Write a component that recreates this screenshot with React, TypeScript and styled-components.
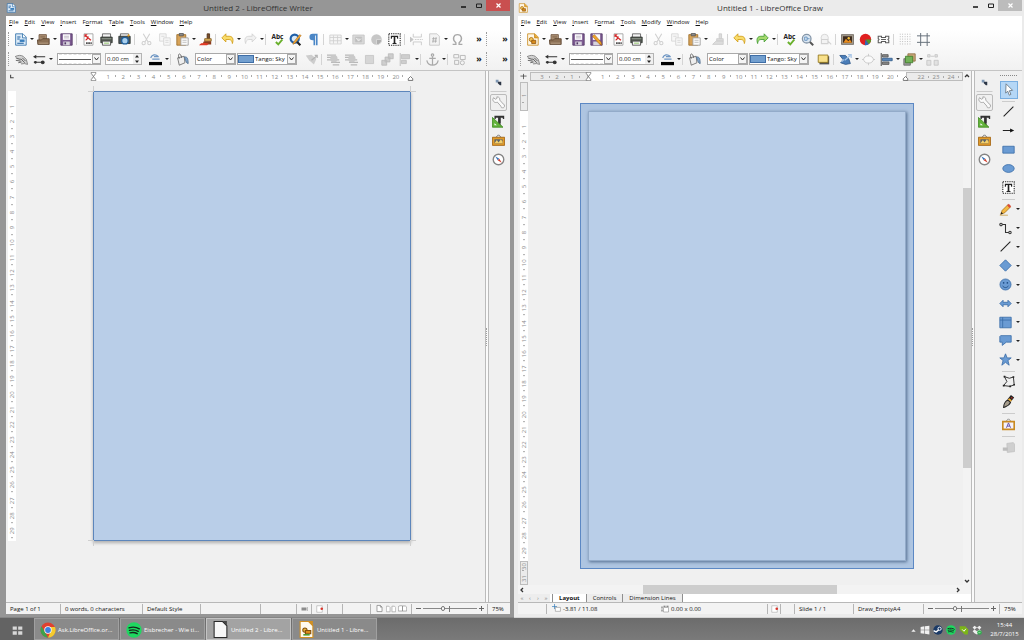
import React, { ReactNode } from "react";
import styled, { createGlobalStyle, css } from "styled-components";

const GlobalStyle = createGlobalStyle`
  * { box-sizing: border-box; }
  body {
    margin: 0;
    background: #777;
    color: #111;
    font: 500 6px/10px "Open Sans", "Noto Sans", sans-serif;
  }
  button, input, select {
    margin: 0;
    padding: 0;
    border: 0;
    background: none;
    color: inherit;
    font: inherit;
  }
  svg { display: block; flex: none; }
`;

/* ---------- icons (16 x 16 grid) ---------- */

const BLUE = "#6a9bd3";
const EDGE = "#3a6ca8";
const FAINT = "#c4c4c4";

const ICONS: Record<string, ReactNode> = {
  writerDoc: (
    <>
      <path d="M2 1h9l4 4v10H2z" fill="#dcebf8" stroke="#2b6ca8" />
      <path d="M10.500 1v5H15" fill="#fff" stroke="#2b6ca8" />
      <path d="M4 5h4M4 7.500h3M4 12.500h8" stroke="#1d5f9e" strokeWidth="1.300" />
      <path d="M7 8h6v3H7z" fill="#3b7fbd" />
    </>
  ),
  drawDoc: (
    <>
      <path d="M2 1h9l4 4v10H2z" fill="#fff7e6" stroke="#c98a1c" />
      <path d="M10.500 1v5H15" fill="#e6a52e" stroke="#c98a1c" />
      <circle cx="6.500" cy="8" r="2.500" fill="#f3c456" stroke="#a66a10" />
      <path d="M7 9h5v4H7z" fill="#d98d1b" stroke="#8f5510" />
    </>
  ),
  open: (
    <>
      <path d="M2.500 2h9v8h-9z" fill="#b59a7e" stroke="#6b5039" />
      <path d="M4 4h6M4 6h6" stroke="#7d6148" />
      <path d="M0.500 8.500h5l1.500-1.500h8v7h-14z" fill="#8c7156" stroke="#57402b" />
      <path d="M2 12.500h12" stroke="#c4ab90" />
    </>
  ),
  save: (
    <>
      <path d="M1 1h14v14H1z" fill="#7c5a91" stroke="#4f3563" />
      <path d="M3.500 1.500h9v7h-9z" fill="#fbfafc" />
      <path d="M5 4h6M5 6h6" stroke="#b7b0bd" />
      <path d="M4 10.500h8V15H4z" fill="#d7d3dc" />
      <path d="M5.500 11.500h2V14h-2z" fill="#4f3563" />
    </>
  ),
  saveAs: (
    <>
      <path d="M1 1h14v14H1z" fill="#7c5a91" stroke="#4f3563" />
      <path d="M3.500 1.500h9v7h-9z" fill="#fbfafc" />
      <path d="M4 10.500h8V15H4z" fill="#d7d3dc" />
      <path d="M3 4l8 9 3.500 2-1-4-8-9z" fill="#f0a428" stroke="#a3600c" strokeWidth=".7" />
    </>
  ),
  pdf: (
    <>
      <path d="M2.500 1h11v14h-11z" fill="#fff" stroke="#9a9a9a" />
      <path d="M3 1.500h4L4 5H3z" fill="#d42a2a" />
      <path d="M4 3l7 6M4.500 9c2-1 3-3 3-5" stroke="#d42a2a" strokeWidth="1.500" fill="none" />
      <path d="M5 12.500h7" stroke="#444" strokeWidth="2" strokeDasharray="2 .7" />
    </>
  ),
  print: (
    <>
      <path d="M3 1h10v5H3z" fill="#f4f4f4" stroke="#555" />
      <path d="M1 5h14v7H1z" fill="#555b54" stroke="#2e322e" />
      <path d="M2 7h12" stroke="#9ba49a" />
      <path d="M3 10h10v5H3z" fill="#f4f4f4" stroke="#444" />
      <path d="M5 12.500h6" stroke="#7fbf4e" />
    </>
  ),
  preview: (
    <>
      <path d="M3 1h10v5H3z" fill="#f4f4f4" stroke="#555" />
      <path d="M1 4h14v9H1z" fill="#4b5862" stroke="#2e322e" />
      <circle cx="8.500" cy="9.500" r="4" fill="#a9d0ee" stroke="#1f5f9c" strokeWidth="1.600" />
      <path d="M12 4l2-2" stroke="#e29c20" strokeWidth="2" />
    </>
  ),
  cut: (
    <g fill="none" stroke="#cfcfcf" strokeWidth="1.300">
      <path d="M4 1l6 10M12 1L6 11" />
      <circle cx="4.500" cy="12.500" r="2" />
      <circle cx="11.500" cy="12.500" r="2" />
    </g>
  ),
  copy: (
    <g fill="#f7f7f7" stroke="#d4d4d4">
      <path d="M2 1h8v9H2z" />
      <path d="M7 6h8v9H7z" />
      <path d="M4 4h4M9 9h4M9 11.500h4" />
    </g>
  ),
  paste: (
    <>
      <path d="M1 2h11v13H1z" fill="#d7a359" stroke="#9b6a25" />
      <path d="M4 0.500h5v3H4z" fill="#8c8c8c" stroke="#555" />
      <path d="M6 6h9v9H6z" fill="#fafafa" stroke="#9a9a9a" />
      <path d="M8 9h5M8 11.500h5" stroke="#b9b9b9" />
    </>
  ),
  brush: (
    <>
      <path d="M10 1h3v6h-3z" fill="#7a4d2a" stroke="#4b2d16" />
      <path d="M7 7h8v3H7z" fill="#e0b35c" stroke="#7d5a1d" />
      <path d="M6 10h9v4H4z" fill="#8a3c1d" />
      <path d="M0 15c2-3 4-2 6-3l6 1-2 2z" fill="#e03c28" />
    </>
  ),
  brushOff: (
    <g fill="#dcdcdc" stroke="#cacaca">
      <path d="M10 1h3v6h-3z" />
      <path d="M7 7h8v3H7z" />
      <path d="M6 10h9v4H2z" />
    </g>
  ),
  undo: <path d="M1 6l5-5v3h4c4 0 6 3 4 9 0-3-2-5-4-5H6v3z" fill="#f8dc6a" stroke="#d09a12" />,
  redo: <path d="M15 6l-5-5v3H6C2 4 0 7 2 13c0-3 2-5 4-5h4v3z" fill="#a4d86c" stroke="#3f9a2f" />,
  redoOff: <path d="M15 6l-5-5v3H6C2 4 0 7 2 13c0-3 2-5 4-5h4v3z" fill="#f0f0f0" stroke="#d2d2d2" />,
  spell: (
    <>
      <text x="8" y="7" fontSize="8" fontWeight="700" fontFamily="Open Sans, sans-serif" textAnchor="middle" fill="#222">Abc</text>
      <path d="M6 11l3 3 5-6" fill="none" stroke="#69b02c" strokeWidth="2.400" />
    </>
  ),
  find: (
    <>
      <circle cx="7" cy="7" r="5" fill="#d8e9f8" stroke="#1f5fa8" strokeWidth="2.600" />
      <path d="M10 11l4 4" stroke="#222" strokeWidth="2.600" />
      <path d="M5 12l8-10 2 1-7 9-3 2z" fill="#f2a733" stroke="#a3600c" strokeWidth=".6" />
    </>
  ),
  pilcrow: <path d="M13 1H7a4 4 0 0 0 0 8h1v6h2V3h1v12h2z" fill="#4a86c6" />,
  tableOff: (
    <g fill="#f5f5f5" stroke="#cfcfcf">
      <path d="M1 2.500h14v11H1z" />
      <path d="M1 5.500h14M1 9.500h14M5.500 3v10M10.500 3v10" />
    </g>
  ),
  imageOff: (
    <g fill="#dadada" stroke={FAINT}>
      <path d="M1 2.500h14v11H1z" />
      <path d="M4 5h8v6H4z" fill="#bcbcbc" />
      <path d="M5 6l3 4 3-3" stroke="#f0f0f0" />
    </g>
  ),
  chartOff: (
    <>
      <circle cx="8" cy="8" r="6.500" fill="#c6c6c6" />
      <path d="M8 8h6.500A6.500 6.500 0 0 1 8 14.500z" fill="#b0b0b0" stroke="#ddd" />
    </>
  ),
  textBox: (
    <>
      <path d="M1 1h14v14H1z" fill="#fff" stroke="#222" strokeWidth="1.300" strokeDasharray="1.500 1.200" />
      <path d="M3.500 3.500h9V7h-1.200l-.5-2H9v7l1.500.5v1h-5v-1L7 12V5H5.200l-.5 2H3.500z" fill="#222" />
    </>
  ),
  breakOff: (
    <g stroke={FAINT} fill="none">
      <path d="M4 1v4h10V1M4 15v-4h10v4" />
      <path d="M6 8h10" strokeDasharray="2 1" />
      <path d="M0 5l4 3-4 3z" fill={FAINT} />
    </g>
  ),
  fieldOff: (
    <g stroke={FAINT} fill="#f3f3f3">
      <path d="M2 1h9l3 3v11H2z" />
      <path d="M7 5L6 12M10 5l-1 7M5 7h6M5 10h6" stroke="#aaa" />
    </g>
  ),
  omega: <path d="M2 14h4v-2C1 8 3 2 8 2s7 6 2 10v2h4" fill="none" stroke="#a8a8a8" strokeWidth="1.700" />,
  zoomPage: (
    <>
      <circle cx="7" cy="7" r="5.300" fill="#dbe7f2" stroke="#8596a8" strokeWidth="1.600" />
      <path d="M4.500 5h3v4h-3zM7.500 7h3" stroke="#5a8abb" fill="none" />
      <path d="M11 11l4 4" stroke="#555" strokeWidth="2.400" />
    </>
  ),
  zoomOff: (
    <g stroke="#d2d2d2" fill="#f3f3f3">
      <circle cx="7" cy="6" r="4.500" />
      <path d="M3 8h8v5H3zM11 10l4 4" strokeWidth="1.400" />
    </g>
  ),
  picture: (
    <>
      <path d="M0.500 2h15v12h-15z" fill="#a39b8e" stroke="#6b645b" />
      <path d="M2.500 4h11v8h-11z" fill="#3c2a1c" />
      <path d="M3 12l3-5 3 3 2-2 2.500 4z" fill="#e98c1c" />
      <circle cx="9.500" cy="6.500" r="1.500" fill="#f7c13c" />
    </>
  ),
  chart: (
    <>
      <circle cx="8" cy="8" r="7" fill="#df2020" />
      <path d="M8 8h7a7 7 0 0 1-3 5.700z" fill="#4f9c2c" />
      <path d="M8 8l4 5.700A7 7 0 0 1 7 15z" fill="#2c6cb8" />
    </>
  ),
  link: (
    <g fill="none" stroke="#5c5c5c" strokeWidth="1.300">
      <path d="M1.500 4h4v1.500h5V4h4v3l-1 1 1 1v3h-4v-1.500h-5V12h-4V9l1-1-1-1zM5 8h6" />
    </g>
  ),
  dots: <path d="M1 1.500h15M1 4.500h15M1 7.500h15M1 10.500h15M1 13.500h15" stroke="#a5a5a5" strokeDasharray="1 2" />,
  guides: <path d="M4.500 0v16M12.500 0v16M0 3.500h16M0 11.500h16" stroke="#66707a" strokeWidth="1.200" fill="none" />,
  points: (
    <>
      <path d="M0 4.500c4-2 7-2 10-.5l4 4 1.500 6-4-1-4 .5" fill="#d2d2d2" stroke="#777" />
      <path d="M1 6l6 2M1 9l6 1M4 12l4-1M7 7l5 5M9 6l4 4" stroke="#666" strokeWidth="1.200" />
    </>
  ),
  lineEnds: (
    <g stroke="#333" strokeWidth="1.300" fill="#333">
      <path d="M3 4.500h12M1 11.500h12" />
      <path d="M0 4.500l4-2.500v5z" strokeWidth="0" />
      <circle cx="12" cy="11.500" r="1.700" />
      <circle cx="3" cy="11.500" r="1" />
    </g>
  ),
  lineColor: (
    <>
      <path d="M2 6c2-4 6-5 9-2M4 7.500h9M6 4.500h6" fill="none" stroke="#6d95c3" strokeWidth="1.500" />
      <path d="M0 11h16v4H0z" fill="#000" />
    </>
  ),
  bucket: (
    <>
      <path d="M2 6l8-2 1 8-7 3z" fill="#eee" stroke="#666" />
      <path d="M4 7C1 0 6-1 7 6" fill="none" stroke="#555" />
      <path d="M10 5c4-1 5 2 5 8-2 0-3-3-4-6z" fill="#7fa3c9" stroke="#56718f" />
    </>
  ),
  rotateOff: (
    <>
      <path d="M1 3l7-1 6 5-3 7-6-5z" fill="#cdcdcd" />
      <path d="M8 9l6-5M12 3h3v3" stroke="#b3b3b3" fill="none" strokeWidth="1.500" />
    </>
  ),
  wrapOff: (
    <>
      <path d="M0 2.500h11M0 5.500h11M0 8.500h15M5 11.500h11M7 14.500h8" stroke="#b8b8b8" strokeWidth="1.500" />
      <circle cx="8.500" cy="7" r="4.500" fill="#c9c9c9" />
    </>
  ),
  squareOff: <path d="M3 3h10v10H3z" fill="#d6d6d6" stroke="#c4c4c4" />,
  arrangeOff: (
    <g fill="#cecece" stroke="#b9b9b9">
      <path d="M9 1h6v6H9zM5 5h6v6H5zM1 9h6v6H1z" />
    </g>
  ),
  alignOff: (
    <>
      <path d="M1.500 0v16" stroke="#b5b5b5" />
      <path d="M3 2h10v5H3zM3 9h6v4H3z" fill="#cecece" stroke="#bcbcbc" />
    </>
  ),
  anchorOff: (
    <g fill="none" stroke="#a9a9a9" strokeWidth="1.500">
      <circle cx="8" cy="2.500" r="1.500" />
      <path d="M8 4v11M4 6.500h8M1 9c1 5 4 6 7 6s6-1 7-6" />
    </g>
  ),
  groupOff: (
    <g fill="none" stroke="#b9b9b9" strokeWidth="1.200">
      <path d="M1 2h6v4H1zM9 3h6v5H9zM2 9h5v5H2z" />
      <circle cx="11.500" cy="12" r="2.500" />
    </g>
  ),
  shadow: (
    <>
      <path d="M3 4h12v10H3z" fill="#555" />
      <path d="M1.500 2.500h12v9h-12z" fill="#f8e08a" stroke="#8c6f14" />
    </>
  ),
  transform: (
    <>
      <path d="M1 3h7l4 4 2 6-6 1-6-2 3-4z" fill="#4a7db8" stroke="#2c5688" />
      <path d="M7 9l7-6M11 2h4v4M3 11l3-3" fill="none" stroke="#a9c6e6" strokeWidth="1.500" />
    </>
  ),
  ellipseOff: (
    <g fill="#fafafa" stroke={FAINT}>
      <ellipse cx="8" cy="8" rx="6" ry="4.500" />
      <path d="M8 1v3M8 12v3M0 8h2M14 8h2" />
    </g>
  ),
  align: (
    <>
      <path d="M1.500 0v16" stroke="#222" />
      <path d="M3 2h7v3H3zM3 11h8v3H3z" fill="#888" stroke="#555" />
      <path d="M3 6.500h12v3H3z" fill="#5b86b8" stroke="#2f5a8a" />
    </>
  ),
  arrange: (
    <>
      <path d="M6 1h9v9H6z" fill="#c9a579" stroke="#8a6a3d" />
      <path d="M1 7h8v8H1z" fill="#999" stroke="#666" />
      <path d="M3 4h9v8H3z" fill="#72b257" stroke="#3e7d28" />
    </>
  ),
  distributeOff: (
    <g fill="#e2e2e2" stroke={FAINT}>
      <path d="M1 9h5v6H1zM10 9h5v6h-5zM2 2h3v3H2zM11 2h3v3h-3zM6 4h4" />
    </g>
  ),
  wrench: (
    <path d="M2 2l2 2 2-1V1c3 0 4 2 3.500 4L14 10c2 0 2 5-1 4.500-2 0-2-1-2-2L6.500 7.500C4 9 1 7 1 4z" fill="#fafafa" stroke="#9a9a9a" />
  ),
  styles: (
    <>
      <path d="M3 1h12v4h-1.500L13 3.500h-2.500V12l1.500 1H6l1.500-1V3.500H5L4.500 5H3z" fill="#333" />
      <path d="M0.500 3v12h13z" fill="#63b33b" stroke="#3d8a1d" />
      <path d="M3 10v2.500h3z" fill="#fff" />
      <path d="M8.500 3v5l2 2V3z" fill="#333" />
    </>
  ),
  gallery: (
    <>
      <path d="M5 4l3-3 3 3" stroke="#555" fill="none" />
      <path d="M0.500 4h15v10h-15z" fill="#e09a28" stroke="#9c5e0b" />
      <path d="M3 6.500h10v5H3z" fill="#5b636b" />
      <path d="M3 11.500l3-4 2 3 3-4 2 3v2z" fill="#f3d06b" />
    </>
  ),
  compass: (
    <>
      <circle cx="8" cy="8" r="6.500" fill="#fff" stroke="#858585" strokeWidth="1.700" />
      <path d="M4 4l5 3-2 2z" fill="#2f6fb8" />
      <path d="M12 12L7 9l2-2z" fill="#d23b2a" />
    </>
  ),
  corner: (
    <>
      <path d="M4 4h4v4H4z" fill="#7f98b5" />
      <path d="M7 7h5v5h-2l-3-3z" fill="#2c3646" />
    </>
  ),
  cursor: <path d="M5 1l8 8-4 .5 2 4.500-2 1-2-5-2.500 2.500z" fill="#fff" stroke="#61707d" />,
  line: <path d="M2 14L14 2" stroke="#222" strokeWidth="1.400" />,
  arrow: (
    <>
      <path d="M1 8h11" stroke="#222" strokeWidth="1.300" />
      <path d="M10 5.500L15 8l-5 2.500z" fill="#111" />
    </>
  ),
  rect: <path d="M1 4h14v8.500H1z" fill={BLUE} stroke={EDGE} />,
  ellipse: <ellipse cx="8" cy="8" rx="7" ry="4.800" fill={BLUE} stroke={EDGE} />,
  pencil: (
    <>
      <path d="M2 14l2-5 7-7 3 3-7 7z" fill="#f4b942" stroke="#a9721a" />
      <path d="M10 3l2-2 3 3-2 2z" fill="#d94d3a" />
      <path d="M2 14l1-3 2 2z" fill="#222" />
      <path d="M1 15h10" stroke="#c9a04a" />
    </>
  ),
  connector: (
    <g fill="none" stroke="#333" strokeWidth="1.300">
      <path d="M4 3h4v10h4" />
      <circle cx="2.500" cy="3" r="1.500" />
      <circle cx="13.500" cy="13" r="1.500" />
    </g>
  ),
  diamond: <path d="M8 1l7 7-7 7-7-7z" fill={BLUE} stroke={EDGE} />,
  smiley: (
    <>
      <circle cx="8" cy="8" r="6.800" fill={BLUE} stroke={EDGE} />
      <path d="M4.500 9.500c1 3 6 3 7 0" fill="none" stroke="#1c4a80" />
      <circle cx="5.700" cy="6" r="1" fill="#1c4a80" />
      <circle cx="10.300" cy="6" r="1" fill="#1c4a80" />
    </>
  ),
  doubleArrow: <path d="M1 8l4-4v2.500h6V4l4 4-4 4V9.500H5V12z" fill={BLUE} stroke={EDGE} />,
  flowchart: (
    <>
      <path d="M1 1.500h14v13H1z" fill={BLUE} stroke={EDGE} />
      <path d="M4.500 1.500v13M1 5h14" stroke={EDGE} />
    </>
  ),
  callout: <path d="M2 2h13v8H9l-5 4v-4H1V3z" fill={BLUE} stroke={EDGE} />,
  star: <path d="M8 1l2 5h5l-4 3.300L12.500 15 8 11.500 3.500 15 5 9.300 1 6h5z" fill={BLUE} stroke={EDGE} />,
  polygon: (
    <g fill="none" stroke="#222" strokeWidth="1.100">
      <path d="M3 2l6 2 5-1.500 1 9.500-5 2-8-1 4-5z" />
      <path d="M3 2h.1M14 2.500h.1M15 12h.1M2 13h.1M10 14h.1" strokeWidth="2" strokeLinecap="square" />
    </g>
  ),
  pen: (
    <>
      <path d="M11 0l4 3-4 5-4-3z" fill="#222" />
      <path d="M9 4l3 2.500-1 2-4-3z" fill="#f0b038" />
      <path d="M7 6l3.500 3C9 13 5 14 2 15.500 2 12 4 8 7 6z" fill="#a59c8c" stroke="#222" strokeWidth="1.300" />
      <path d="M11 3l2 1" stroke="#c23325" strokeWidth="1.500" />
    </>
  ),
  fontwork: (
    <>
      <path d="M5 4l3-3 3 3" stroke="#777" fill="none" />
      <path d="M1 4.500h14V14H1z" fill="#f5f2fb" stroke="#c98a22" strokeWidth="2" />
      <path d="M5.500 12L8 6l2.500 6M6.500 10h3" fill="none" stroke="#6450a8" strokeWidth="1.200" />
    </>
  ),
  extrudeOff: (
    <>
      <path d="M6 3l8-1 1.500 2v9l-9 1z" fill="#cfcfcf" stroke="#c2c2c2" />
      <path d="M1 8h6v4H1z" fill="#bdbdbd" />
    </>
  ),
  chrome: (
    <>
      <circle cx="8" cy="8" r="7.500" fill="#e0402f" />
      <path d="M1.500 4.300L6 12l2 3.500A7.500 7.500 0 0 1 1.500 4.300z" fill="#3ba24c" />
      <path d="M8 15.500L11.500 8 10 5h5a7.500 7.500 0 0 1-7 10.500z" fill="#f5cb2e" />
      <circle cx="8" cy="8" r="3.700" fill="#fff" />
      <circle cx="8" cy="8" r="2.900" fill="#3b7fe0" />
    </>
  ),
  spotify: (
    <>
      <circle cx="8" cy="8" r="7.700" fill="#1ed760" />
      <path d="M3 5.800c4-1.200 7.500-.7 10.300 1M3.500 8.400c3.500-1 6.300-.5 8.700.9M4 10.900c3-.8 5.200-.4 7.200.8" fill="none" stroke="#14251a" strokeWidth="1.400" strokeLinecap="round" />
    </>
  ),
  office: (
    <>
      <path d="M2 0.500h8l4 4v11H2z" fill="#f7f7f7" stroke="#2a2a2a" />
      <path d="M10 0h4v4.500z" fill="#444" />
    </>
  ),
  officeDraw: (
    <>
      <path d="M2 0.500h8l4 4v11H2z" fill="#fffaf0" stroke="#d29022" />
      <path d="M10 0h4v4.500z" fill="#d29022" />
      <circle cx="6.500" cy="8.500" r="2" fill="#e7b43c" stroke="#85510c" />
      <path d="M7 9h5v3H7z" fill="#d98d1b" stroke="#85510c" />
      <path d="M5 13h6" stroke="#4c9c30" strokeWidth="1.500" />
    </>
  ),
  windows: <path d="M1 3l6-1v5.500H1zM8 2l7-1v6.500H8zM1 8.500h6V14l-6-1zM8 8.500h7V15l-7-1z" fill="#f0f0f0" />,
  start: <path d="M1 2h6v5H1zM9 2h6v5H9zM1 9h6v5H1zM9 9h6v5H9z" fill="#d8d8d8" />,
  steam: (
    <>
      <circle cx="8" cy="8" r="7.500" fill="#1b3a66" />
      <circle cx="10.500" cy="6" r="2.600" fill="none" stroke="#fff" strokeWidth="1.500" />
      <path d="M1 9l4 2 4-3" stroke="#fff" strokeWidth="2.400" fill="none" />
    </>
  ),
  tag: (
    <>
      <path d="M1 2l9 0 5 5-1 8-5 0-8-8z" fill="#7cb518" />
      <path d="M5 7l3 3 3-4" stroke="#fff" fill="none" strokeWidth="1.500" />
    </>
  ),
  dropbox: (
    <>
      <path d="M4 1l4 3 4-3 3 3-3 3 3 3-4 3-3 2-4-2-3-3 3-3-3-3z" fill="#eee" />
      <path d="M4 7l4-3 4 3-4 3z" fill="#777" />
      <circle cx="12" cy="12" r="3.700" fill="#2fae4c" />
      <path d="M10.500 12l1 1 2-2" stroke="#fff" fill="none" />
    </>
  ),
  triangle: <path d="M8 5l5 6H3z" fill="#f0f0f0" />,
  selectMode: <path d="M1 5h10v6H1zM13 4h1v8h-1z" fill="#8c8c8c" />,
  modified: (
    <>
      <path d="M1.500 1.500h11v13h-11z" fill="#fff" stroke="#999" />
      <circle cx="11.500" cy="7.500" r="2.600" fill="#d8332a" />
    </>
  ),
  pageView: <path d="M3.500 2.500h6l3 3v8h-9zM9.500 2.500v3h3" fill="#fff" stroke="#8a8a8a" strokeWidth="1.400" />,
  pagesView: (
    <path d="M0.500 3.500h4l2 2v7h-6zM9.500 3.500h4l2 2v7h-6z" fill="#fff" stroke="#a5a5a5" strokeWidth="1.200" />
  ),
  bookView: <path d="M8 3.500c-3-1-5-.5-7.500 1v8H8zM8 3.500h5l2.500 2v7H8z" fill="#fff" stroke="#8a8a8a" strokeWidth="1.200" />,
  position: (
    <>
      <path d="M0 4.500h9M4.500 0v9" stroke="#3b7fbd" strokeWidth="1.300" />
      <path d="M6 6h9v7H6z" fill="#fff" stroke="#888" />
    </>
  ),
  size: (
    <>
      <path d="M5 5h10v9H5z" fill="#fff" stroke="#777" />
      <path d="M2 3v11M5 2.500h10" stroke="#333" strokeWidth="1.500" strokeDasharray="4 2" />
    </>
  ),
  tabStop: <path d="M6 4v7h7" stroke="#444" strokeWidth="2.400" fill="none" />,
  cross: <path d="M8 2v12M1 7h14" stroke="#333" strokeWidth="1.600" fill="none" />,
  hourglass: <path d="M4 0.500h8v2L8 8l4 5.500v2H4v-2L8 8 4 2.500z" fill="#fff" stroke="#666" strokeWidth="1.300" />,
  indent: <path d="M8 8l4 4v3H4v-3z" fill="#fff" stroke="#555" strokeWidth="1.400" />,
};

const Icon = ({ name, size = 13 }: { name: string; size?: number }) => (
  <svg width={size} height={size} viewBox="0 0 16 16" aria-hidden="true">
    {ICONS[name]}
  </svg>
);

/* ---------- window frame ---------- */

const Desktop = styled.div`
  display: flex;
  flex-direction: column;
  min-height: 100vh;
`;

const Windows = styled.main`
  flex: 1;
  display: grid;
  grid-template-columns: 514fr 510fr;
`;

const Frame = styled.section<{ $active?: boolean }>`
  display: flex;
  flex-direction: column;
  min-width: 0;
  padding: ${(p) => (p.$active ? "0 2px 3px 4px" : "0 4px 3px 6px")};
  background: ${(p) => (p.$active ? "#ebebeb" : "#969696")};
  border-bottom: 1px solid ${(p) => (p.$active ? "#d4d4d4" : "#858585")};
`;

const TitleBar = styled.header`
  display: grid;
  grid-template-columns: 1fr auto 1fr;
  height: 16px;
  align-items: center;
`;

const Title = styled.h1`
  margin: 0;
  color: #333;
  font-size: 8px;
  line-height: 14px;
  font-weight: 400;
`;

const Controls = styled.div`
  display: flex;
  align-self: start;
  justify-content: flex-end;
`;

const Control = styled.button<{ $kind: "min" | "max" | "close"; $active?: boolean }>`
  display: grid;
  place-items: center;
  width: ${(p) => (p.$kind === "close" ? 24 : 15)}px;
  height: 11px;
  ${(p) => p.$kind === "close" && css`background: ${p.$active ? "#bcbcbc" : "#c94f4f"};`}
`;

const Client = styled.div`
  flex: 1;
  display: flex;
  flex-direction: column;
  min-width: 0;
  background: #f0f0f0;
`;

const MenuBar = styled.nav`
  display: flex;
  align-items: flex-start;
  gap: 6px;
  height: 13px;
  padding: 1px 3px 0;
  background: #fff;
`;

const MenuItem = styled.button`
  line-height: 10px;
`;

const Bars = styled.div`
  display: flex;
  flex-direction: column;
  padding-bottom: 1px;
  border-bottom: 1px solid #c4c4c4;
  background: linear-gradient(#ffffff, #f1f1f1);
`;

const ToolRow = styled.div`
  display: flex;
  align-items: center;
  height: 20px;
`;

const Grip = styled.span`
  width: 1px;
  height: 14px;
  margin: 0 2px;
  border-left: 1px dotted #9c9c9c;
`;

const ToolButton = styled.button`
  display: grid;
  place-items: center;
  flex: none;
  width: 18px;
  height: 18px;
`;

const CaretButton = styled.button`
  display: grid;
  place-items: center;
  flex: none;
  width: 5px;
  height: 16px;
  &::after {
    content: "";
    border: 2px solid transparent;
    border-top-color: #222;
    border-bottom: 0;
  }
`;

const Divider = styled.span`
  flex: none;
  width: 1px;
  height: 11px;
  margin: 0 2px 0 1px;
  background: #d4d4d4;
`;

const More = styled.button`
  width: 10px;
  font-size: 9px;
  font-weight: 700;
`;

const Spacer = styled.span<{ $w?: number }>`
  ${(p) => (p.$w ? css`flex: none; width: ${p.$w}px;` : css`flex: 1;`)}
`;

const SelectWrap = styled.label<{ $w: number }>`
  display: flex;
  align-items: center;
  flex: none;
  width: ${(p) => p.$w}px;
  height: 12px;
  border: 1px solid #a9a9a9;
  background: #fff;
`;

const SelectBox = styled.select`
  flex: 1;
  min-width: 0;
  height: 10px;
  padding-left: 1px;
  appearance: none;
  line-height: 10px;
`;

const Chevron = styled.span`
  display: grid;
  place-items: center;
  width: 9px;
  height: 10px;
  border: 1px solid #a9a9a9;
  background: #f4f4f4;
  flex: none;
`;

const Swatch = styled.span`
  flex: none;
  width: 16px;
  height: 8px;
  border: 1px solid #3f6ea6;
  background: #729fcf;
`;

const StrokeSample = styled.span`
  flex: none;
  width: 32px;
  height: 10px;
  margin-left: 1px;
  background: linear-gradient(#555, #555) center / 100% 1px no-repeat;
  border-block: 1px dashed #e2e2e2;
`;

const Spin = styled.label`
  display: flex;
  align-items: center;
  flex: none;
  width: 37px;
  height: 12px;
  border: 1px solid #b4b4b4;
  background: #fff;
  input {
    flex: 1;
    min-width: 0;
    padding-left: 1px;
    height: 10px;
  }
`;

const ChevronMark = () => (
  <Chevron>
    <svg width="5" height="4" viewBox="0 0 5 4"><path d="M.5.5l2 2.500 2-2.500" fill="none" stroke="#333" /></svg>
  </Chevron>
);

/* "|" separator, "v" drop-down arrow, anything else an icon */
const Tools = ({ items }: { items: string }) => (
  <>
    {items.split(" ").map((item, i) => {
      if (item === "|") return <Divider key={i} />;
      if (item === "v") return <CaretButton key={i} aria-label="More options" />;
      return (
        <ToolButton key={i} aria-label={item}>
          <Icon name={item} />
        </ToolButton>
      );
    })}
  </>
);

const Overflow = () => (
  <>
    <Spacer />
    <More aria-label="More buttons">»</More>
    <Grip />
    <Spacer $w={11} />
    <More aria-label="More toolbars">»</More>
  </>
);

const DrawingProps = () => (
  <>
    <Grip />
    <Spacer $w={1} />
    <Tools items="points lineEnds v" />
    <Spacer $w={4} />
    <SelectWrap $w={44}>
      <StrokeSample />
      <SelectBox aria-label="Line style"><option aria-label="Continuous" /></SelectBox>
      <ChevronMark />
    </SelectWrap>
    <Spacer $w={4} />
    <Spin>
      <input aria-label="Line width" defaultValue="0.00 cm" />
      <svg width="8" height="10" viewBox="0 0 8 10">
        <path d="M0 0h8v10H0z" fill="#f0f0f0" />
        <path d="M4 1l2 2.500H2zM4 9l2-2.500H2z" fill="#222" />
      </svg>
    </Spin>
    <Spacer $w={4} />
    <Tools items="lineColor v | bucket" />
    <Spacer $w={4} />
    <SelectWrap $w={41}>
      <SelectBox aria-label="Fill type"><option>Color</option></SelectBox>
      <ChevronMark />
    </SelectWrap>
    <Spacer $w={1} />
    <SelectWrap $w={60}>
      <Swatch />
      <SelectBox aria-label="Fill color"><option>Tango: Sky</option></SelectBox>
      <ChevronMark />
    </SelectWrap>
    <Spacer $w={5} />
  </>
);

/* the access key is the first letter, or the one set between underscores */
const Menus = ({ items }: { items: string[] }) => (
  <MenuBar>
    {items.map((m) => {
      const parts = m.split("_");
      const [before, key, after] = parts.length > 2 ? parts : ["", m[0], m.slice(1)];
      return <MenuItem key={m}>{before}<u>{key}</u>{after}</MenuItem>;
    })}
  </MenuBar>
);

const WindowFrame = ({ title, icon, active, children }: { title: string; icon: string; active?: boolean; children: ReactNode }) => (
  <Frame $active={active}>
    <TitleBar>
      <Icon name={icon} size={10} />
      <Title>{title}</Title>
      <Controls>
        <Control $kind="min" aria-label="Minimize"><svg width="5" height="5"><path d="M0 4h5" stroke="#111" strokeWidth="1.500" /></svg></Control>
        <Control $kind="max" aria-label="Maximize"><svg width="6" height="5"><path d="M.5 1h5v3.500h-5z" fill="none" stroke="#222" /></svg></Control>
        <Control $kind="close" $active={active} aria-label="Close"><svg width="5" height="5"><path d="M.5.5l4 4M4.500.5l-4 4" stroke="#fff" strokeWidth="1.200" /></svg></Control>
      </Controls>
    </TitleBar>
    <Client>{children}</Client>
  </Frame>
);

/* ---------- work area ---------- */

const Body = styled.div`
  flex: 1;
  display: flex;
  min-height: 0;
`;

const Work = styled.div<{ $scroll?: boolean }>`
  flex: 1;
  min-width: 0;
  display: grid;
  grid-template-columns: 10px 1fr ${(p) => (p.$scroll ? "8px" : "")};
  grid-template-rows: 11px 1fr;
`;

const WorkColumn = styled.div`
  flex: 1;
  display: flex;
  flex-direction: column;
  min-width: 0;
`;

const Corner = styled.div`
  display: grid;
  place-items: center;
`;

const RulerTrack = styled.div<{ $vertical?: boolean; $shift?: number }>`
  display: flex;
  flex-direction: ${(p) => (p.$vertical ? "column" : "row")};
  min-width: 0;
  overflow: hidden;
  color: #888;
  font-weight: 400;
  padding: ${(p) => (p.$vertical ? "0 0 0 2px" : `1px 0 0 ${p.$shift ?? 0}px`)};
`;

const Scale = styled.div<{ $vertical?: boolean }>`
  position: relative;
  display: flex;
  flex-direction: ${(p) => (p.$vertical ? "column" : "row")};
  flex: none;
  ${(p) => (p.$vertical ? css`height: 450px; width: 8px;` : css`width: 318px; height: 9px;`)}
  background: #fff;
`;

const Margin = styled.div<{ $vertical?: boolean; $reverse?: boolean; $drawn?: boolean; $size?: number }>`
  display: flex;
  overflow: hidden;
  min-width: 0;
  flex: ${(p) => (p.$size ? `0 0 ${p.$size}px` : "1 1 0")};
  flex-direction: ${(p) => (p.$vertical ? "column" : "row")}${(p) => (p.$reverse ? "-reverse" : "")};
  ${(p) => (p.$vertical ? css`width: 8px;` : css`height: 9px;`)}
  ${(p) => p.$drawn && css`border: 1px solid #bcbcbc; background: #ebebeb;`}
`;

const Mark = styled.span<{ $vertical?: boolean; $span?: number; $fixed?: number }>`
  position: relative;
  display: flex;
  align-items: center;
  justify-content: center;
  min-width: 0;
  min-height: 0;
  flex: ${(p) => (p.$fixed ? `0 0 ${p.$fixed}px` : `${p.$span ?? 1} 1 0`)};
  line-height: 8px;
  ${(p) => p.$vertical && css`writing-mode: vertical-rl; transform: rotate(180deg);`}
  &:not(:empty)::after {
    content: "";
    position: absolute;
    background: #aaa;
    ${(p) => (p.$vertical ? css`top: 0; left: 3px; width: 2px; height: 1px;` : css`right: 0; top: 3px; width: 1px; height: 2px;`)}
  }
`;

const Pin = styled.span<{ $end?: boolean }>`
  position: absolute;
  z-index: 1;
  top: 0;
  ${(p) => (p.$end ? "right: -4px;" : "left: -4px;")}
`;

const range = (from: number, to: number) => Array.from({ length: to - from + 1 }, (_, i) => from + i);

const HScale = () => (
  <Scale>
    <Pin><Icon name="hourglass" size={9} /></Pin>
    <Mark $span={0.5} />
    {range(1, 20).map((n) => <Mark key={n}>{n}</Mark>)}
    <Mark $span={0.5} />
    <Pin $end><Icon name="indent" size={9} /></Pin>
  </Scale>
);

const VScale = () => (
  <Scale $vertical>
    <Mark $vertical $span={0.5} />
    {range(1, 29).map((n) => <Mark key={n} $vertical>{n}</Mark>)}
    <Mark $vertical $span={0.2} />
  </Scale>
);

const Canvas = styled.div<{ $top: number; $shift: number }>`
  display: flex;
  justify-content: center;
  align-items: flex-start;
  min-width: 0;
  overflow: hidden;
  padding: ${(p) => `${p.$top}px 0 0 ${p.$shift}px`};
`;

const WriterPage = styled.div`
  position: relative;
  width: 318px;
  height: 450px;
  border: 1px solid #5d86bb;
  background: #b9cee8;
  box-shadow: 0 2px 3px #00000044;
`;

const CropMark = styled.span<{ $v: "top" | "bottom"; $h: "left" | "right" }>`
  position: absolute;
  ${(p) => p.$v}: -6px;
  ${(p) => p.$h}: -6px;
  width: 6px;
  height: 6px;
  border: 0 solid #cfcfcf;
  border-${(p) => (p.$v === "top" ? "bottom" : "top")}-width: 1px;
  border-${(p) => (p.$h === "left" ? "right" : "left")}-width: 1px;
`;

const Shape = styled.div`
  padding: 7px;
  border: 1px solid #5c88c4;
  background: #aec5e1;
`;

const DrawPage = styled.div`
  width: 318px;
  height: 450px;
  border: 1px solid #93abc9;
  background: #b9cee8;
  box-shadow: 1px 1px 3px #3d577acc;
`;

const Scroll = styled.div<{ $vertical?: boolean }>`
  display: flex;
  flex-direction: ${(p) => (p.$vertical ? "column" : "row")};
  align-items: stretch;
  background: #f3f3f3;
  ${(p) => (p.$vertical ? css`grid-row: 1 / span 2; grid-column: 3;` : css`height: 9px;`)}
`;

const ScrollButton = styled.button`
  display: grid;
  place-items: center;
  flex: none;
  width: 8px;
  height: 9px;
`;

const Part = styled.span<{ $grow: number; $thumb?: boolean }>`
  flex: ${(p) => p.$grow} 1 0;
  background: ${(p) => (p.$thumb ? "#cdcdcd" : "transparent")};
`;

const ScrollArrow = ({ d, label }: { d: string; label: string }) => (
  <ScrollButton aria-label={label}>
    <svg width="6" height="6" viewBox="0 0 6 6"><path d={d} fill="none" stroke="#333" strokeWidth="1.300" /></svg>
  </ScrollButton>
);

/* ---------- sidebar and toolbox ---------- */

const Splitter = styled.div`
  display: flex;
  align-items: center;
  width: 4px;
  border: 1px solid #bbb;
  border-width: 0 1px;
  background: #fafafa;
  &::after {
    content: "";
    height: 18px;
    border-left: 1px dotted #a0a0a0;
  }
`;

const SideTabs = styled.aside<{ $edge?: number }>`
  display: flex;
  flex-direction: column;
  align-items: center;
  width: ${(p) => 19 + (p.$edge ?? 1)}px;
  padding: 1px ${(p) => p.$edge ?? 1}px 0 0;
`;

const SideTab = styled.button<{ $on?: boolean; $rule?: boolean }>`
  display: grid;
  place-items: center;
  width: 17px;
  height: 17px;
  margin-bottom: 2px;
  border: 1px solid ${(p) => (p.$on ? "#bbb" : "transparent")};
  border-radius: 2px;
  ${(p) => p.$rule && css`border-bottom-color: #ccc; border-radius: 0; height: 20px;`}
`;

const Sidebar = ({ edge }: { edge?: number }) => (
  <SideTabs $edge={edge}>
    <SideTab $rule aria-label="Sidebar settings"><Icon name="corner" size={11} /></SideTab>
    <SideTab $on aria-label="Properties"><Icon name="wrench" /></SideTab>
    <SideTab aria-label="Styles"><Icon name="styles" /></SideTab>
    <SideTab aria-label="Gallery"><Icon name="gallery" /></SideTab>
    <SideTab aria-label="Navigator"><Icon name="compass" /></SideTab>
  </SideTabs>
);

const Toolbox = styled.div`
  display: flex;
  flex-direction: column;
  align-items: center;
  width: 27px;
  padding-top: 4px;
`;

const ToolboxGrip = styled.span`
  width: 17px;
  height: 5px;
  border-top: 1px dotted #888;
`;

const ToolGroup = styled.div<{ $h: number; $first?: boolean }>`
  display: flex;
  flex-direction: column;
  height: ${(p) => p.$h}px;
  ${(p) => !p.$first && css`
    margin-top: 2px;
    &::before { content: ""; align-self: center; width: 13px; height: 1px; background: #ccc; }
  `}
`;

const ToolCell = styled.div`
  flex: 1;
  display: flex;
  align-items: center;
  justify-content: center;
  gap: 1px;
`;

const BoxButton = styled.button<{ $on?: boolean }>`
  display: grid;
  place-items: center;
  width: 18px;
  height: 18px;
  ${(p) => p.$on && css`border: 1px solid #79aee0; background: #b5d7f6;`}
`;

const TOOL_GROUPS = [
  { h: 19, items: "cursor" },
  { h: 96, items: "line arrow rect ellipse textBox" },
  { h: 170, items: "pencil connector line diamond smiley doubleArrow flowchart callout star", menu: true },
  { h: 40, items: "polygon pen" },
  { h: 21, items: "fontwork" },
  { h: 22, items: "extrudeOff" },
];

/* ---------- sheet tabs and status bar ---------- */

const SheetTabs = styled.div`
  display: flex;
  height: 8px;
  background: #fff;
`;

const SheetNav = styled.button`
  width: 8px;
  background: #ededed;
  color: #888;
  line-height: 8px;
`;

const SheetTab = styled.button<{ $on?: boolean }>`
  padding: 0 6px;
  border: 1px solid #8f8f8f;
  border-width: 0 1px;
  margin-left: -1px;
  line-height: 8px;
  background: ${(p) => (p.$on ? "#fff" : "#ececec")};
  font-weight: ${(p) => (p.$on ? 700 : 500)};
`;

const StatusBar = styled.footer`
  display: flex;
  align-items: center;
  height: 12px;
  border-top: 1px solid #b8b8b8;
  background: #f3f3f3;
`;

const Cell = styled.span<{ $w?: number; $pad?: number }>`
  display: flex;
  align-items: center;
  gap: 2px;
  height: 10px;
  white-space: nowrap;
  padding-left: ${(p) => p.$pad ?? 4}px;
  border-right: 1px solid #b5b5b5;
  ${(p) => (p.$w ? css`flex: none; width: ${p.$w}px;` : css`flex: 1; min-width: 0;`)}
  &:last-child { border-right: 0; }
`;

const ZoomButton = styled.button`
  display: grid;
  place-items: center;
  width: 5px;
  height: 8px;
`;

const Zoom = styled.input`
  width: 54px;
  height: 8px;
  appearance: none;
  background:
    linear-gradient(#777, #777) 26px 50% / 1px 6px no-repeat,
    linear-gradient(#888, #888) center / 100% 1px no-repeat;
  &::-webkit-slider-thumb {
    appearance: none;
    width: 4px;
    height: 5px;
    border: 1px solid #777;
    border-radius: 2px;
    background: #fff;
  }
`;

const ZoomCells = () => (
  <>
    <Cell $w={76}>
      <ZoomButton aria-label="Zoom out"><svg width="5" height="5"><path d="M0 2.500h5" stroke="#666" /></svg></ZoomButton>
      <Zoom type="range" aria-label="Zoom" defaultValue={35} />
      <ZoomButton aria-label="Zoom in"><svg width="5" height="5"><path d="M0 2.500h5M2.500 0v5" stroke="#666" /></svg></ZoomButton>
    </Cell>
    <Cell $w={22}>75%</Cell>
  </>
);

/* ---------- taskbar ---------- */

const Taskbar = styled.footer`
  display: flex;
  align-items: stretch;
  height: 22px;
  background: linear-gradient(#6c6c6c, #7a7a7a);
  color: #fff;
`;

const StartButton = styled.button`
  display: grid;
  place-items: center;
  width: 34px;
  padding-top: 2px;
  background: #636363;
`;

const Task = styled.button<{ $on?: boolean }>`
  display: flex;
  align-items: center;
  gap: 2px;
  width: 85px;
  margin-right: 1px;
  padding: 1px 0 0 5px;
  border: 1px solid ${(p) => (p.$on ? "#c4c4c4" : "#a0a0a0")};
  background: ${(p) => (p.$on ? "#a3a3a3" : "#8a8a8a")};
  white-space: nowrap;
`;

const Tray = styled.div`
  display: flex;
  align-items: center;
  gap: 3px;
  margin-left: auto;
  padding-top: 2px;
`;

const Clock = styled.time`
  width: 39px;
  text-align: center;
  line-height: 9px;
`;

export default function App() {
  return (
    <Desktop>
      <GlobalStyle />
      <Windows>
        <WindowFrame title="Untitled 2 - LibreOffice Writer" icon="writerDoc">
          <Menus items={["File", "Edit", "View", "Insert", "F_o_rmat", "T_a_ble", "Tools", "Window", "Help"]} />
          <Bars>
            <ToolRow>
              <Grip />
              <Tools items="writerDoc v open v save | pdf print preview | cut copy paste v brush | undo v redoOff v | spell find pilcrow | tableOff v imageOff chartOff textBox | breakOff fieldOff v omega" />
              <Overflow />
            </ToolRow>
            <ToolRow>
              <DrawingProps />
              <Tools items="rotateOff | wrapOff wrapOff squareOff arrangeOff alignOff v | anchorOff v | groupOff" />
              <Overflow />
            </ToolRow>
          </Bars>
          <Body>
            <Work>
              <Corner><Icon name="tabStop" size={7} /></Corner>
              <RulerTrack $shift={3}>
                <Margin />
                <HScale />
                <Margin />
              </RulerTrack>
              <RulerTrack $vertical>
                <Margin $vertical $size={9} />
                <VScale />
              </RulerTrack>
              <Canvas $top={9} $shift={3}>
                <WriterPage>
                  <CropMark $v="top" $h="left" />
                  <CropMark $v="top" $h="right" />
                  <CropMark $v="bottom" $h="left" />
                  <CropMark $v="bottom" $h="right" />
                </WriterPage>
              </Canvas>
            </Work>
            <Splitter />
            <Sidebar edge={2} />
          </Body>
          <StatusBar>
            <Cell $w={55}>Page 1 of 1</Cell>
            <Cell $w={82}>0 words, 0 characters</Cell>
            <Cell $w={58}>Default Style</Cell>
            <Cell />
            <Cell $w={36} />
            <Cell $w={15}><Icon name="selectMode" size={8} /></Cell>
            <Cell $w={16}><Icon name="modified" size={8} /></Cell>
            <Cell $w={15} />
            <Cell $w={28} />
            <Cell $w={41}>
              <Icon name="pageView" size={9} />
              <Icon name="pagesView" size={10} />
              <Icon name="bookView" size={9} />
            </Cell>
            <ZoomCells />
          </StatusBar>
        </WindowFrame>

        <WindowFrame title="Untitled 1 - LibreOffice Draw" icon="drawDoc" active>
          <Menus items={["File", "Edit", "View", "Insert", "F_o_rmat", "Tools", "Modify", "Window", "Help"]} />
          <Bars>
            <ToolRow>
              <Grip />
              <Tools items="drawDoc v open v save saveAs | pdf print | cut copy paste v brushOff | undo v redo v | spell zoomPage zoomOff | picture chart link | dots guides" />
            </ToolRow>
            <ToolRow>
              <DrawingProps />
              <Tools items="shadow | transform v ellipseOff align v arrange v distributeOff" />
            </ToolRow>
          </Bars>
          <Body>
            <WorkColumn>
              <Work $scroll>
                <Corner><Icon name="cross" size={7} /></Corner>
                <RulerTrack $shift={2}>
                  <Margin $reverse $drawn>
                    <Mark $fixed={7} />
                    {range(1, 3).map((n) => <Mark key={n} $fixed={15}>{n}</Mark>)}
                  </Margin>
                  <HScale />
                  <Margin $drawn>
                    <Mark $fixed={7} />
                    {range(22, 24).map((n) => <Mark key={n} $fixed={15}>{n}</Mark>)}
                  </Margin>
                </RulerTrack>
                <RulerTrack $vertical>
                  <Margin $vertical $reverse $drawn $size={29}>
                    <Mark $vertical $fixed={7} />
                    <Mark $vertical $fixed={15}>1</Mark>
                  </Margin>
                  <VScale />
                  <Margin $vertical $drawn>
                    <Mark $vertical $fixed={9}>30</Mark>
                    <Mark $vertical $fixed={15}>31</Mark>
                  </Margin>
                </RulerTrack>
                <Canvas $top={21} $shift={2}>
                  <Shape><DrawPage /></Shape>
                </Canvas>
                <Scroll $vertical>
                  <ScrollArrow d="M1 4l2-2 2 2" label="Scroll up" />
                  <Part $grow={108} />
                  <Part $grow={279} $thumb />
                  <Part $grow={108} />
                  <ScrollArrow d="M1 2l2 2 2-2" label="Scroll down" />
                </Scroll>
              </Work>
              <Scroll>
                <ScrollArrow d="M4 1L2 3l2 2" label="Scroll left" />
                <Part $grow={117} />
                <Part $grow={194} $thumb />
                <Part $grow={117} />
                <ScrollArrow d="M2 1l2 2-2 2" label="Scroll right" />
                <Spacer $w={9} />
              </Scroll>
              <SheetTabs>
                {["First", "Previous", "Next", "Last"].map((label, i) => (
                  <SheetNav key={label} aria-label={label}>{"«‹›»"[i]}</SheetNav>
                ))}
                <Spacer $w={3} />
                <SheetTab $on>Layout</SheetTab>
                <SheetTab>Controls</SheetTab>
                <SheetTab>Dimension Lines</SheetTab>
              </SheetTabs>
            </WorkColumn>
            <Splitter />
            <Sidebar />
            <Toolbox>
              <ToolboxGrip />
              {TOOL_GROUPS.map((g, i) => (
                <ToolGroup key={i} $h={g.h} $first={i === 0}>
                  {g.items.split(" ").map((name) => (
                    <ToolCell key={name}>
                      <BoxButton $on={name === "cursor"} aria-label={name}><Icon name={name} /></BoxButton>
                      {g.menu && <CaretButton aria-label={`${name} options`} />}
                    </ToolCell>
                  ))}
                </ToolGroup>
              ))}
            </Toolbox>
          </Body>
          <StatusBar>
            <Cell $w={29} />
            <Cell $pad={5}>
              <Icon name="position" size={9} />
              -3.81 / 11.08
              <Spacer />
              <Icon name="size" size={8} />
              0.00 x 0.00
              <Spacer $w={64} />
            </Cell>
            <Cell $w={13} $pad={3}><Icon name="modified" size={8} /></Cell>
            <Cell $w={14} />
            <Cell $w={59}>Slide 1 / 1</Cell>
            <Cell $w={70}>Draw_EmptyA4</Cell>
            <ZoomCells />
          </StatusBar>
        </WindowFrame>
      </Windows>

      <Taskbar>
        <StartButton aria-label="Start"><Icon name="start" size={11} /></StartButton>
        <Task><Icon name="chrome" size={16} />Ask.LibreOffice.or...</Task>
        <Task><Icon name="spotify" size={16} />Eisbrecher - Wie ti...</Task>
        <Task $on><Icon name="office" size={17} />Untitled 2 - Libre...</Task>
        <Task><Icon name="officeDraw" size={17} />Untitled 1 - Libre...</Task>
        <Tray>
          {["triangle", "windows", "steam", "spotify", "tag", "dropbox"].map((name) => (
            <Icon key={name} name={name} size={name === "triangle" ? 7 : 10} />
          ))}
          <Clock>15:44<br />28/7/2015</Clock>
        </Tray>
      </Taskbar>
    </Desktop>
  );
}
